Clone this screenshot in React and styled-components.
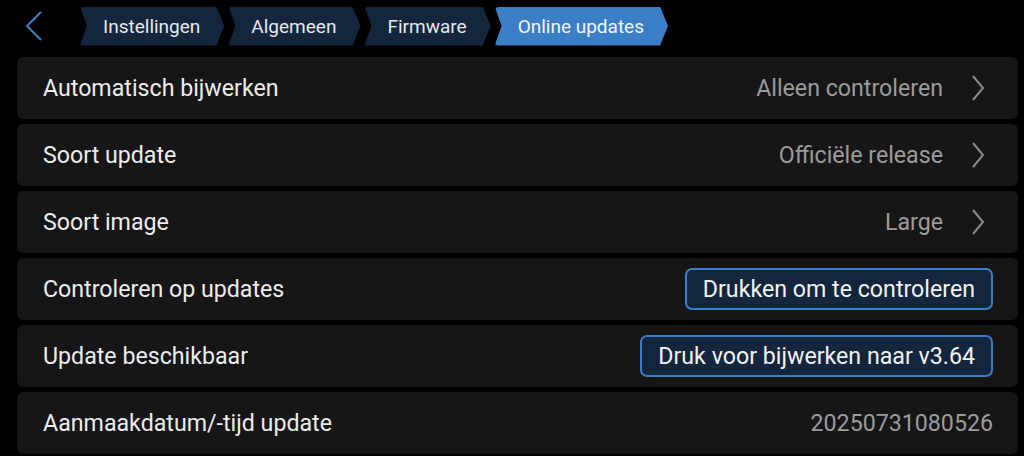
import React from "react";
import styled, { createGlobalStyle } from "styled-components";

const GlobalStyle = createGlobalStyle`
  body {
    margin: 0;
    background: #000;
    font-family: Roboto, "Liberation Sans", sans-serif;
  }
`;

const Page = styled.div`
  width: 1024px;
  height: 456px;
  box-sizing: border-box;
  padding: 0 6px 0 17px;
  display: flex;
  flex-direction: column;
  overflow: hidden;
`;

const Header = styled.div`
  height: 53px;
  display: flex;
  align-items: center;
  padding-left: 8px;
`;

const BackButton = styled.button`
  background: none;
  border: none;
  padding: 0;
  width: 18px;
  height: 30px;
  margin-right: 37px;
  margin-top: -1px;
  display: flex;
  cursor: pointer;
`;

const Crumbs = styled.nav`
  display: flex;
  gap: 4px;
  margin-top: -1px;
`;

const Crumb = styled.div`
  height: 39px;
  display: flex;
  align-items: center;
  padding: 0 24px 0 23px;
  font-size: 19px;
  color: ${(p) => (p.$active ? "#f2f6fb" : "#e6e8ec")};
  background: ${(p) => (p.$active ? "#3a7fc6" : "#13263d")};
  border-radius: 4px;
  clip-path: polygon(
    0 0,
    calc(100% - 8px) 0,
    100% 50%,
    calc(100% - 8px) 100%,
    0 100%,
    7px 50%
  );
`;

const List = styled.div`
  display: flex;
  flex-direction: column;
  gap: 5px;
  margin-top: 4px;
`;

const Row = styled.div`
  height: 62px;
  background: #161616;
  border-radius: 6px;
  display: flex;
  align-items: center;
  padding: 0 25px 0 26px;
`;

const Label = styled.div`
  flex: 1;
  font-size: 23.2px;
  color: #ececec;
`;

const Value = styled.div`
  font-size: 23.2px;
  color: #9b9b9b;
`;

const Chevron = styled.svg`
  width: 14px;
  height: 28px;
  margin-left: 28px;
  margin-right: 8px;
`;

const ActionButton = styled.button`
  height: 42px;
  box-sizing: border-box;
  padding: 0 16px;
  border: 2px solid #3a7fc6;
  border-radius: 7px;
  background: #13263d;
  color: #f2f2f2;
  font-family: inherit;
  font-size: 23.2px;
  cursor: pointer;
`;

const RowChevron = () => (
  <Chevron viewBox="0 0 14 28">
    <polyline
      points="2,2 12,14 2,26"
      fill="none"
      stroke="#8a8a8a"
      strokeWidth="2"
    />
  </Chevron>
);

const crumbs = ["Instellingen", "Algemeen", "Firmware", "Online updates"];

const App = () => {
  return (
    <>
      <GlobalStyle />
      <Page>
        <Header>
          <BackButton>
            <svg width="18" height="30" viewBox="0 0 18 30">
              <polyline
                points="16,1 2,15 16,29"
                fill="none"
                stroke="#3a7fc6"
                strokeWidth="2"
              />
            </svg>
          </BackButton>
          <Crumbs>
            {crumbs.map((c, i) => (
              <Crumb key={c} $active={i === crumbs.length - 1}>
                {c}
              </Crumb>
            ))}
          </Crumbs>
        </Header>
        <List>
          <Row>
            <Label>Automatisch bijwerken</Label>
            <Value>Alleen controleren</Value>
            <RowChevron />
          </Row>
          <Row>
            <Label>Soort update</Label>
            <Value>Officiële release</Value>
            <RowChevron />
          </Row>
          <Row>
            <Label>Soort image</Label>
            <Value>Large</Value>
            <RowChevron />
          </Row>
          <Row>
            <Label>Controleren op updates</Label>
            <ActionButton>Drukken om te controleren</ActionButton>
          </Row>
          <Row>
            <Label>Update beschikbaar</Label>
            <ActionButton>Druk voor bijwerken naar v3.64</ActionButton>
          </Row>
          <Row>
            <Label>Aanmaakdatum/-tijd update</Label>
            <Value>20250731080526</Value>
          </Row>
        </List>
      </Page>
    </>
  );
};

export default App;
